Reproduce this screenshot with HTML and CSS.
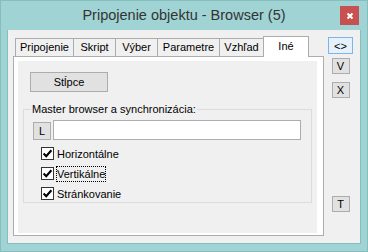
FILE: index.html
```html
<!DOCTYPE html>
<html>
<head>
<meta charset="utf-8">
<link rel="stylesheet" href="styles.css">
</head>
<body>
<div class="window">
  <div class="titlebar">
    <div></div>
    <div class="title">Pripojenie objektu - Browser (5)</div>
    <div class="close"><svg width="8" height="8" viewBox="0 0 8 8"><path d="M1.5 1.5 L6.5 6.5 M6.5 1.5 L1.5 6.5" stroke="#fff" stroke-width="2" fill="none"/></svg></div>
  </div>
  <div class="client">
    <div class="tabctl">
      <div class="tabrow">
        <div class="tab w59">Pripojenie</div>
        <div class="tab w43">Skript</div>
        <div class="tab w43">Výber</div>
        <div class="tab w63">Parametre</div>
        <div class="tab w45">Vzhľad</div>
        <div class="tab sel w46">Iné</div>
      </div>
      <div class="panel">
        <div class="page">
          <div class="btn stlpce">Stĺpce</div>
          <fieldset class="group">
            <legend>Master browser a synchronizácia:</legend>
            <div class="lrow">
              <div class="btn lbtn">L</div>
              <div class="input"></div>
            </div>
            <div class="check"><span class="box"><svg width="11" height="11" viewBox="0 0 11 11"><path d="M1.6 5.6 L4.2 8.2 L9.4 2.2" stroke="#000" stroke-width="2.1" fill="none"/></svg></span><span class="lbl">Horizontálne</span></div>
            <div class="check"><span class="box"><svg width="11" height="11" viewBox="0 0 11 11"><path d="M1.6 5.6 L4.2 8.2 L9.4 2.2" stroke="#000" stroke-width="2.1" fill="none"/></svg></span><span class="lbl focus">Vertikálne</span></div>
            <div class="check"><span class="box"><svg width="11" height="11" viewBox="0 0 11 11"><path d="M1.6 5.6 L4.2 8.2 L9.4 2.2" stroke="#000" stroke-width="2.1" fill="none"/></svg></span><span class="lbl">Stránkovanie</span></div>
          </fieldset>
        </div>
      </div>
    </div>
    <div class="side">
      <div class="btn wide focus">&lt;&gt;</div>
      <div class="btn sm v">V</div>
      <div class="btn sm x">X</div>
      <div class="btn sm t">T</div>
    </div>
  </div>
</div>
</body>
</html>
```
FILE: styles.css
```css
* { box-sizing: border-box; }
body {
  margin: 0;
  font-family: "Liberation Sans", Arial, sans-serif;
  font-size: 11px;
  color: #000;
}
.window {
  width: 368px;
  height: 252px;
  background: #a0d3d3;
  border: 1px solid #86bebe;
  display: flex;
  flex-direction: column;
}
.titlebar {
  height: 29px;
  display: grid;
  grid-template-columns: 1fr auto 1fr;
  align-items: start;
}
.title {
  font-size: 14.5px;
  line-height: 17px;
  padding-top: 6px;
  color: #333;
  white-space: nowrap;
}
.close {
  justify-self: end;
  margin: 5px 8px 0 0;
  width: 19px;
  height: 19px;
  background: #c75050;
  display: flex;
  align-items: center;
  justify-content: center;
}
.client {
  margin: 0 6px;
  height: 214px;
  border: 1px solid #86bebe;
  border-top: 0;
  background: #f0f0f0;
  display: flex;
}
.tabctl {
  margin: 6px 0 0 5px;
  width: 311px;
  display: flex;
  flex-direction: column;
}
.tabrow {
  height: 20px;
  display: flex;
  align-items: flex-end;
  padding-left: 2px;
}
.tab {
  height: 18px;
  border: 1px solid #acacac;
  border-bottom: 0;
  background: #f0f0f0;
  text-align: center;
  line-height: 17px;
  margin-left: -1px;
  white-space: nowrap;
}
.tab:first-child { margin-left: 0; }
.tab.sel {
  height: 21px;
  margin-bottom: -1px;
  background: #fff;
  position: relative;
  z-index: 1;
  line-height: 18px;
}
.w59 { width: 59px; }
.w43 { width: 43px; }
.w63 { width: 63px; }
.w45 { width: 45px; }
.w46 { width: 46px; }
.panel {
  height: 180px;
  border: 1px solid #adadad;
  background: #fff;
  padding: 4px 6px 2px 4px;
}
.page {
  height: 100%;
  background: #f0f0f0;
  padding: 11px 5px 0 5px;
}
.btn {
  border: 1px solid #adadad;
  background: #e1e1e1;
  display: flex;
  align-items: center;
  justify-content: center;
}
.stlpce {
  width: 78px;
  height: 20px;
  margin-left: 7px;
}
.group {
  margin: 10px 0 0 0;
  width: 289px;
  min-width: 0;
  border: 1px solid #dcdcdc;
  padding: 4px 0 2px 9px;
}
.group legend {
  padding: 0 1px;
  margin-left: -2px;
  line-height: 14px;
}
.lrow {
  display: flex;
  align-items: flex-end;
  gap: 2px;
}
.lbtn {
  width: 18px;
  height: 18px;
}
.input {
  width: 248px;
  height: 20px;
  border: 1px solid #abadb3;
  background: #fff;
}
.check {
  display: flex;
  align-items: center;
  height: 13px;
  margin: 7px 0 0 8px;
}
.box {
  width: 13px;
  height: 13px;
  border: 1px solid #333;
  background: #fff;
  display: flex;
}
.lbl {
  margin-left: 2px;
  padding: 1px 1px;
  line-height: 14px;
}
.lbl.focus {
  outline: 1px dotted #000;
  outline-offset: -1px;
}
.side {
  display: flex;
  flex-direction: column;
  align-items: center;
  margin-left: 4px;
  width: 25px;
  padding: 7px 0 31px 0;
}
.wide {
  width: 25px;
  height: 17px;
}
.btn.focus {
  border-color: #7eb4ea;
  background: #e5f1fb;
}
.sm {
  width: 18px;
  height: 16px;
}
.v { margin-top: 4px; }
.x { margin-top: 8px; }
.t { margin-top: auto; }
```
